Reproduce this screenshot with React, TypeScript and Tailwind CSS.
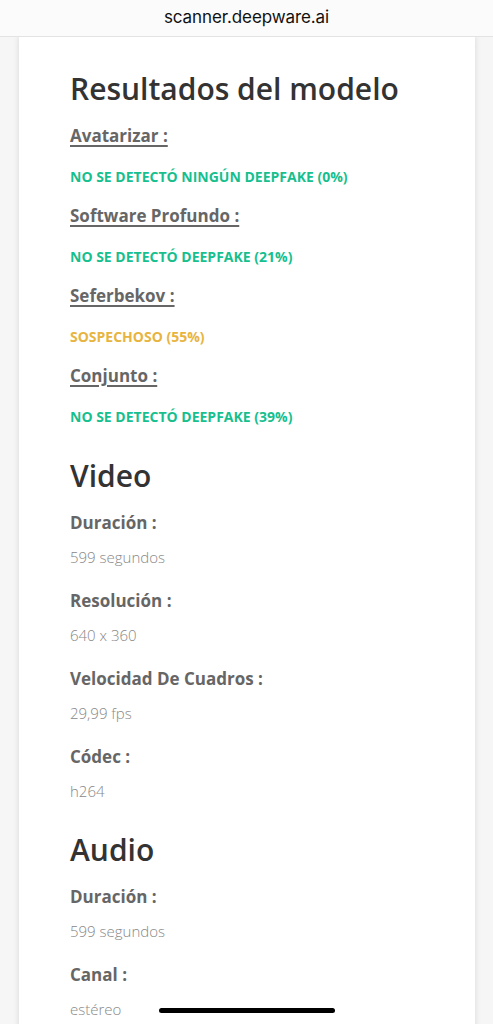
const models = [
  { name: 'Avatarizar :', result: 'NO SE DETECTÓ NINGÚN DEEPFAKE (0%)', tone: 'ok' },
  { name: 'Software Profundo :', result: 'NO SE DETECTÓ DEEPFAKE (21%)', tone: 'ok' },
  { name: 'Seferbekov :', result: 'SOSPECHOSO (55%)', tone: 'warn' },
  { name: 'Conjunto :', result: 'NO SE DETECTÓ DEEPFAKE (39%)', tone: 'ok' },
];

const video = [
  { label: 'Duración :', value: '599 segundos' },
  { label: 'Resolución :', value: '640 x 360' },
  { label: 'Velocidad De Cuadros :', value: '29,99 fps' },
  { label: 'Códec :', value: 'h264' },
];

const audio = [
  { label: 'Duración :', value: '599 segundos' },
  { label: 'Canal :', value: 'estéreo' },
];

function InfoList({ items }: { items: { label: string; value: string }[] }) {
  return (
    <div>
      {items.map((it, i) => (
        <div key={it.label} className={i === 0 ? 'mt-[16px]' : 'mt-[23px]'}>
          <div className="text-[17px] leading-[22px] font-bold text-[#666]">{it.label}</div>
          <div className="mt-[13px] text-[15px] leading-[20px] font-light text-[#888]">{it.value}</div>
        </div>
      ))}
    </div>
  );
}

export default function App() {
  return (
    <div className="relative h-[1024px] overflow-hidden bg-[#f6f6f6] font-['Open_Sans',sans-serif]">
      <div className="h-[37px] bg-[#fbfbfb] border-b border-[#e3e3e3] flex items-center justify-center relative z-10">
        <span className="font-['Inter',sans-serif] text-[17px] text-[#111] tracking-[-0.1px]">scanner.deepware.ai</span>
      </div>

      <div className="mx-[19px] mr-[18px] -mt-px bg-white shadow-[0_0_6px_rgba(0,0,0,0.13)] pl-[51px] pr-6 pt-[33px] pb-10 min-h-[1000px]">
        <h1 className="text-[30px] leading-[40px] font-semibold text-[#333]">Resultados del modelo</h1>

        <div className="mt-[15px]">
          {models.map((m, i) => (
            <div key={m.name} className={i === 0 ? '' : 'mt-[17px]'}>
              <div className="text-[17px] leading-[24px] font-bold text-[#666] underline underline-offset-[3px] decoration-[1.5px]">
                {m.name}
              </div>
              <div
                className={`mt-[19px] text-[14px] leading-[20px] font-bold ${
                  m.tone === 'warn' ? 'text-[#e8b440]' : 'text-[#17bf8e]'
                }`}
              >
                {m.result}
              </div>
            </div>
          ))}
        </div>

        <h2 className="mt-[29px] text-[30px] leading-[40px] font-semibold text-[#333]">Video</h2>
        <InfoList items={video} />

        <h2 className="mt-[29px] text-[30px] leading-[40px] font-semibold text-[#333]">Audio</h2>
        <InfoList items={audio} />
      </div>

      <div className="fixed left-[159px] top-[1008px] w-[176px] h-[5px] rounded-full bg-black" />
    </div>
  );
}
